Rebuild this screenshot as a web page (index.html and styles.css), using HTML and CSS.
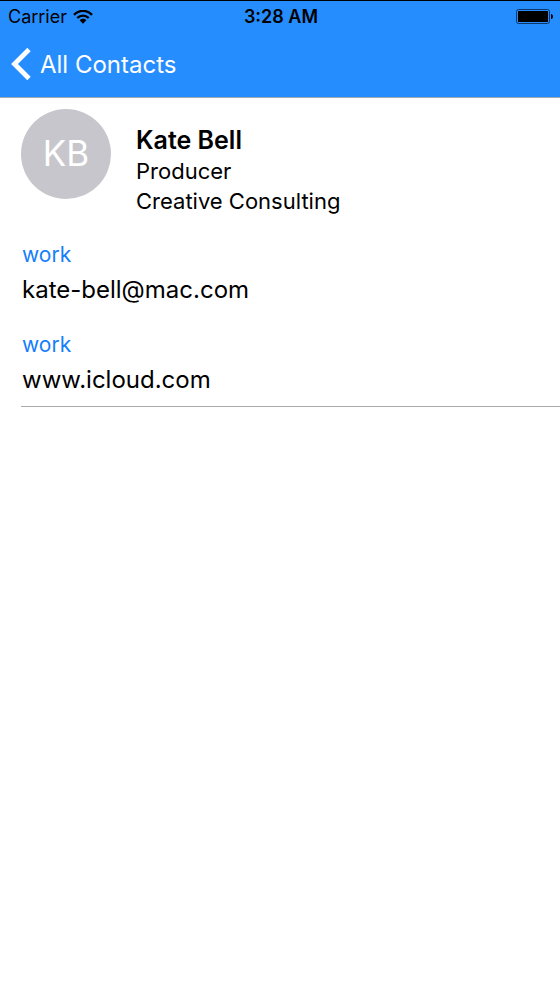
FILE: index.html
```
<!DOCTYPE html>
<html lang="en">
<head>
<meta charset="utf-8">
<meta name="viewport" content="width=device-width, initial-scale=1">
<title>Kate Bell</title>
<link rel="stylesheet" href="styles.css">
</head>
<body>
<header class="top">
  <div class="status">
    <div class="status-left">
      <span>Carrier</span>
      <svg class="wifi" width="20" height="14" viewBox="0 0 20 14" aria-hidden="true">
        <path d="M1 4.800C6-.4 14-.4 19 4.800M4.300 8C7.500 4.800 12.500 4.800 15.700 8" fill="none" stroke="#000" stroke-width="2.400"/>
        <path d="M6.600 10.200C8.600 8.300 11.400 8.300 13.400 10.200L10 13.700Z"/>
      </svg>
    </div>
    <time class="clock">3:28 AM</time>
    <div class="status-right">
      <svg class="battery" width="38" height="16" viewBox="0 0 38 16" role="img" aria-label="Battery full">
        <rect x=".5" y=".5" width="33" height="14" rx="2" fill="none" stroke="#0c3768"/>
        <rect x="2" y="2" width="30" height="11" rx=".5"/>
        <path d="M35 5h.5Q37 5.500 37 7.500T35.500 10H35Z"/>
      </svg>
    </div>
  </div>
  <nav class="nav">
    <button class="back" type="button">
      <svg width="20" height="34" viewBox="0 0 20 34" aria-hidden="true">
        <path d="M18 1.500L3.500 16L18 30.500" fill="none" stroke="#fff" stroke-width="4.800"/>
      </svg>
      <span>All Contacts</span>
    </button>
  </nav>
</header>
<main class="contact">
  <section class="profile">
    <div class="avatar">KB</div>
    <div class="identity">
      <h1 class="name">Kate Bell</h1>
      <p class="detail">Producer</p>
      <p class="detail">Creative Consulting</p>
    </div>
  </section>
  <dl class="fields">
    <div class="field">
      <dt class="label">work</dt>
      <dd class="value">kate-bell@mac.com</dd>
    </div>
    <div class="field">
      <dt class="label">work</dt>
      <dd class="value">www.icloud.com</dd>
    </div>
  </dl>
</main>
</body>
</html>
```
FILE: styles.css
```
* {
  box-sizing: border-box;
}

body {
  margin: 0;
  background: #fff;
  color: #000;
  font-family: Inter, "Liberation Sans", sans-serif;
}

.top {
  background: #268dff;
  border-top: 1px solid #000;
  border-bottom: 1px solid #a3a9b3;
}

.status {
  display: grid;
  grid-template-columns: 1fr auto 1fr;
  align-items: center;
  height: 31px;
  padding: 0 6px 0 8px;
  font-size: 18px;
  line-height: 31px;
}

.status-left {
  display: flex;
  align-items: center;
  gap: 6px;
}

.clock {
  font-weight: 600;
}

.status-right {
  display: flex;
  justify-content: flex-end;
}

.nav {
  display: flex;
  align-items: center;
  height: 65px;
  padding: 0 11px;
}

.back {
  display: flex;
  align-items: center;
  gap: 9px;
  padding: 0;
  border: 0;
  background: none;
  color: #fff;
  font: inherit;
  font-size: 24px;
  line-height: 34px;
}

.contact {
  padding: 11px 0 0 21px;
}

.profile {
  display: flex;
  gap: 25px;
}

.avatar {
  flex: none;
  width: 90px;
  height: 90px;
  border-radius: 50%;
  background: #c7c6cc;
  color: #fff;
  font-size: 35px;
  line-height: 88px;
  text-align: center;
}

.identity {
  padding-top: 16px;
}

.name {
  margin: 0 0 1px;
  font-size: 25px;
  font-weight: 600;
  line-height: 30px;
}

.detail {
  margin: 0;
  font-size: 22px;
  line-height: 30px;
}

.fields {
  display: grid;
  gap: 12px;
  margin: 22px 0 0;
  border-bottom: 1px solid #a9a9a9;
}

.field {
  padding: 0 0 8px 1px;
}

.label {
  color: #157efb;
  font-size: 21px;
  line-height: 34px;
}

.value {
  margin: 0;
  font-size: 24px;
  line-height: 36px;
}
```
